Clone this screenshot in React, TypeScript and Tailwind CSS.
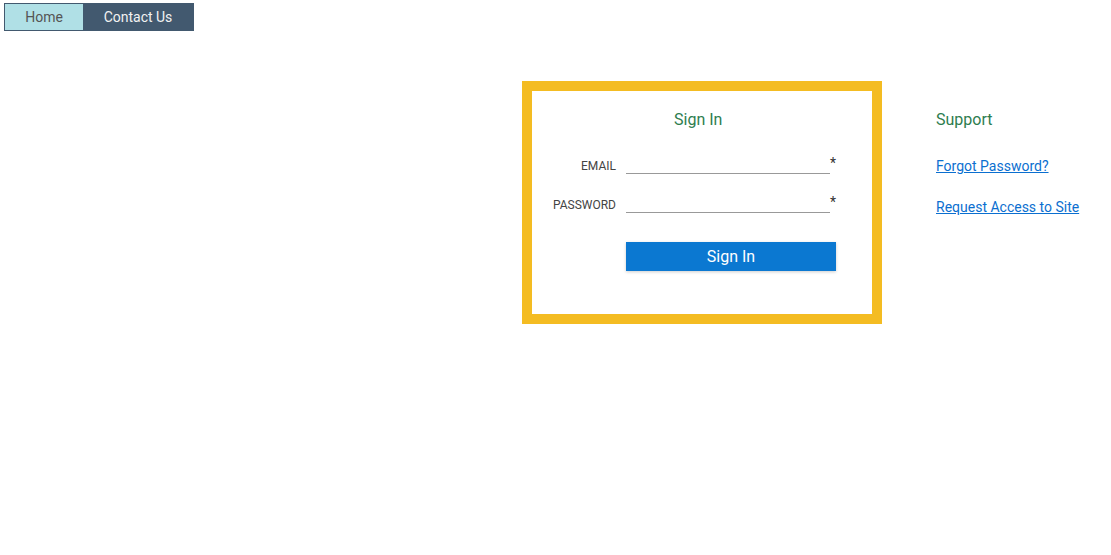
export default function App() {
  return (
    <div className="min-h-[555px] bg-white font-['Roboto',sans-serif]">
      <nav className="ml-[4px] pt-[3px] flex">
        <div className="flex border border-[#42596f] h-[28px]">
          <a className="w-[78px] flex items-center justify-center bg-[#b0e0e6] text-[14px] text-[#555]">
            Home
          </a>
          <a className="w-[110px] flex items-center justify-center bg-[#42596f] text-[14px] text-[#f2f2f2]">
            Contact Us
          </a>
        </div>
      </nav>

      <div className="flex ml-[522px] mt-[50px] gap-[54px]">
        <div className="w-[360px] h-[243px] border-[10px] border-[#f4bc22] bg-white">
          <h2 className="pt-[18px] pl-[142px] text-[16px] leading-[22px] text-[#2e7d4f]">
            Sign In
          </h2>
          <div className="mt-[24px] flex flex-col gap-[20px]">
            <Field label="EMAIL" />
            <Field label="PASSWORD" />
          </div>
          <button className="mt-[29px] ml-[94px] w-[210px] h-[29px] pt-[1px] bg-[#0b78d1] text-white text-[16px] shadow-[0_1px_3px_rgba(0,0,0,0.2)]">
            Sign In
          </button>
        </div>

        <div className="pt-[28px]">
          <h2 className="text-[16px] leading-[22px] text-[#2e7d4f]">Support</h2>
          <div className="mt-[25px] flex flex-col gap-[21px] text-[14px] leading-[20px]">
            <a href="#" className="text-[#0b6fd0] underline">
              Forgot Password?
            </a>
            <a href="#" className="text-[#0b6fd0] underline">
              Request Access to Site
            </a>
          </div>
        </div>
      </div>
    </div>
  );
}

function Field({ label }: { label: string }) {
  return (
    <div className="flex h-[19px]">
      <label className="w-[84px] pt-[3px] text-right text-[12px] leading-[16px] text-[#444]">
        {label}
      </label>
      <div className="ml-[10px] w-[204px] h-full border-b border-[#999]" />
      <span className="mt-[1px] text-[14px] leading-[14px] text-[#333]">*</span>
    </div>
  );
}
